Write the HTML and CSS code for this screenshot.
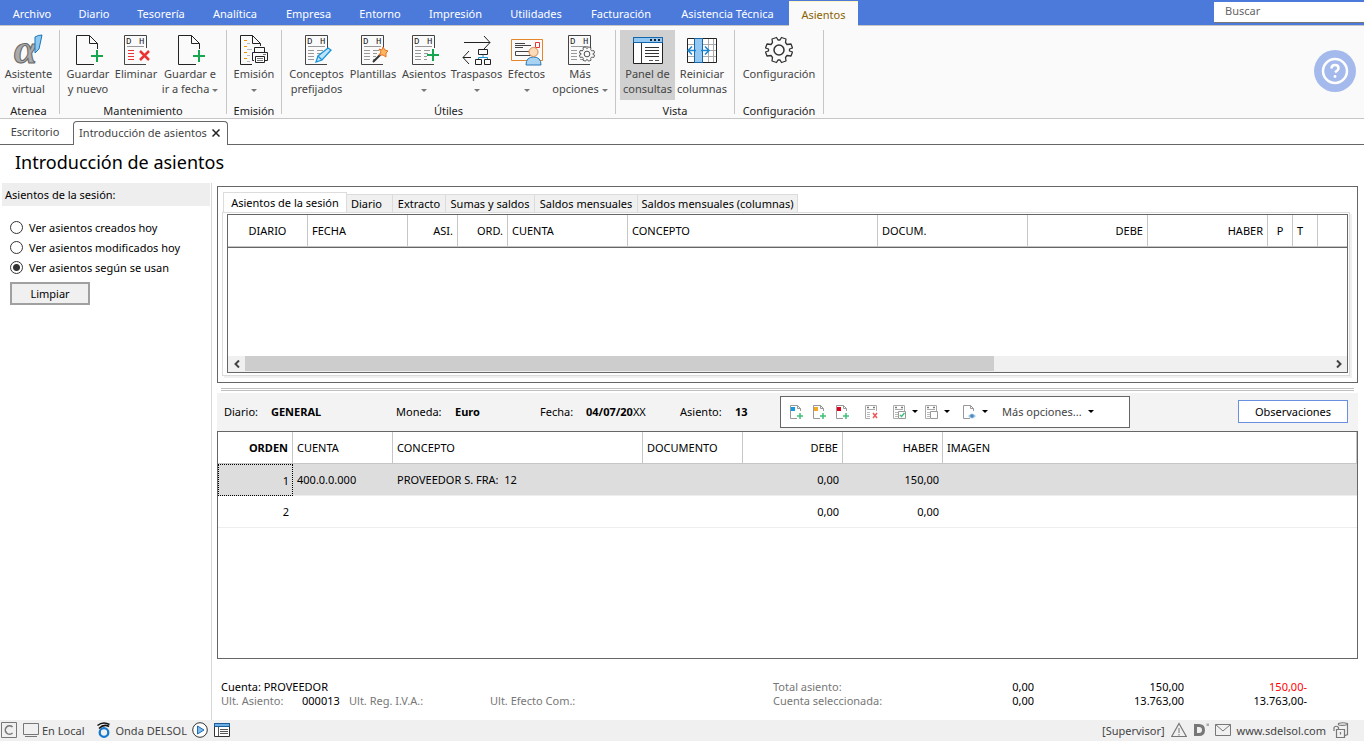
FILE: index.html
```
<!DOCTYPE html>
<html lang="es">
<head>
<meta charset="utf-8">
<title>Introducción de asientos</title>
<link rel="stylesheet" href="styles.css">
</head>
<body>
<svg class="defs" aria-hidden="true">
  <symbol id="page-add" viewBox="-2 0 32 32">
    <path d="M23.500 15V9.500L15.500 1.500H2.500V30.500H20M15.500 1.500V9.500H23.500" fill="none" stroke="#222" stroke-width="1"/>
    <path d="M23 16V28M17 22H29" stroke="#17a650" stroke-width="2"/>
  </symbol>
  <symbol id="dh" viewBox="0 0 32 32">
    <path d="M24.500 14V1.500H2.500V30.500H24" fill="none" stroke="#444"/>
    <text x="4" y="10" class="dh-text">D</text><text x="17" y="10" class="dh-text">H</text>
    <path d="M5 12.500H22" stroke="#999"/>
  </symbol>
  <symbol id="dh-lines" viewBox="0 0 32 32">
    <path d="M5 16.500H11M5 19.500H11M5 22.500H11M5 25.500H11M14 16.500H20M14 19.500H18M14 22.500H17M14 25.500H17" stroke="#999"/>
  </symbol>
  <symbol id="gear" viewBox="0 0 28 28">
    <path d="M11.500 1.500L13 4H15L16.500 1.500L21 3L20.500 6.500L22 8.500L26 8L27.500 12L24.500 13V15L27.500 16L26 20L22 19.500L20.500 21.500L21 25L16.500 26.500L15 24H13L11.500 26.500L7 25L7.500 21.500L6 19.500L2 20L0.500 16L3.500 15V13L0.500 12L2 8L6 8.500L7.500 6.500L7 3Z" fill="#fafafa" stroke="#333" stroke-width="1.300" stroke-linejoin="round"/>
    <circle cx="14" cy="14" r="5" fill="none" stroke="#333" stroke-width="1.500"/>
  </symbol>
  <symbol id="mini-page" viewBox="0 0 16 16">
    <path d="M12.500 7V4.500L9.500 1.500H2.500V14.500H9M9.500 1.500V4.500H12.500" fill="none" stroke="#999"/>
  </symbol>
  <symbol id="mini-add" viewBox="0 0 16 16">
    <path d="M12 9V15M9 12H15" stroke="#3fc07a" stroke-width="1.500"/>
  </symbol>
  <symbol id="mini-dh" viewBox="0 0 16 16">
    <path d="M13.500 7V1.500H2.500V14.500H7M4 5.500H12" fill="none" stroke="#aaa"/>
    <path d="M4 3.500H6M10 3.500H12" stroke="#777" stroke-width="1.500"/>
    <path d="M4 8.500H7M4 10.500H7M4 12.500H7" stroke="#bbb"/>
  </symbol>
</svg>

<nav class="menubar">
  <button>Archivo</button><button>Diario</button><button>Tesorería</button><button>Analítica</button><button>Empresa</button><button>Entorno</button><button>Impresión</button><button>Utilidades</button><button>Facturación</button><button>Asistencia Técnica</button><button class="current">Asientos</button>
  <input class="search" type="text" placeholder="Buscar" aria-label="Buscar">
</nav>

<header class="ribbon">
  <section class="group g-atenea">
    <div class="tools">
      <button class="tool">
        <svg viewBox="0 0 32 32"><text x="1" y="29" class="alpha">α</text><path d="M22 3Q25 1 29 1L26 15L22 19Z" fill="#8cc8f0" stroke="#1b74b8"/></svg>
        <span>Asistente<br>virtual</span></button>
    </div>
    <h2>Atenea</h2>
  </section>
  <section class="group g-mant">
    <div class="tools">
      <button class="tool"><svg><use href="#page-add"/></svg><span>Guardar<br>y nuevo</span></button>
      <button class="tool"><svg viewBox="-2 0 32 32"><use href="#dh" width="32" height="32"/><path d="M6 16.500H12M6 19.500H12M6 22.500H12M6 25.500H12" stroke="#e83434"/><path d="M18 17L27 26M27 17L18 26" stroke="#e83434" stroke-width="2.500"/></svg><span>Eliminar</span></button>
      <button class="tool"><svg><use href="#page-add"/></svg><span>Guardar e<br>ir a fecha <i class="caret"></i></span></button>
    </div>
    <h2>Mantenimiento</h2>
  </section>
  <section class="group g-emi">
    <div class="tools">
      <button class="tool"><svg viewBox="0 0 32 32"><path d="M22.500 12V9.500L14.500 1.500H2.500V30.500H14M14.500 1.500V9.500H22.500" fill="none" stroke="#222"/><path d="M6 6.500H9M6 12.500H9M6 18.500H9M6 24.500H9" stroke="#f39200"/><path d="M9 9.500H12M9 15.500H14M9 21.500H12M9 27.500H12" stroke="#bbb"/><path d="M16.500 18V13.500H26.500V18M16 26.500H14.500V18.500H29.500V26.500H27" fill="#fafafa" stroke="#222"/><path d="M17.500 22.500H26.500V28.500H17.500Z" fill="#fff" stroke="#222"/><path d="M19 24.500H25M19 26.500H25M25 20.500H28" stroke="#777"/></svg><span>Emisión<br><i class="caret"></i></span></button>
    </div>
    <h2>Emisión</h2>
  </section>
  <section class="group g-utiles">
    <div class="tools">
      <button class="tool"><svg viewBox="-2 0 32 32"><use href="#dh" width="32" height="32"/><use href="#dh-lines" width="32" height="32"/><path d="M13 28L15 22L25 14L28 16L19 26ZM15 22L19 26" fill="#bfe3f8" stroke="#1b95d8" stroke-width="1.300"/></svg><span>Conceptos<br>prefijados</span></button>
      <button class="tool"><svg viewBox="-2 0 32 32"><use href="#dh" width="32" height="32"/><use href="#dh-lines" width="32" height="32"/><path d="M14 28L23 19" stroke="#333" stroke-width="2"/><path d="M24 13L26 16L29 17L27 19V23L24 21L20 21L22 18L20 15L23 16Z" fill="#fbb65e" stroke="#e5732a"/></svg><span>Plantillas</span></button>
      <button class="tool"><svg viewBox="-2 0 32 32"><use href="#dh" width="32" height="32"/><use href="#dh-lines" width="32" height="32"/><path d="M23 15V27M17 21H29" stroke="#17a650" stroke-width="2"/></svg><span>Asientos<br><i class="caret"></i></span></button>
      <button class="tool"><svg viewBox="0 0 32 32"><path d="M3 8.500H29M23 2L29 8.500L23 15M10 23.500H2M8 17L2 23.500L8 30M17.500 15.500H26.500V20.500H17.500ZM14.500 25.500H20.500V30.500H14.500ZM23.500 25.500H29.500V30.500H23.500Z" fill="none" stroke="#222"/><path d="M22 21V23M17.500 25V23.500H26.500V25" fill="none" stroke="#1b95d8"/></svg><span>Traspasos<br><i class="caret"></i></span></button>
      <button class="tool"><svg viewBox="0 0 32 32"><path d="M0.500 5.500H31.500V26.500H0.500Z" fill="#fafafa" stroke="#e5862a"/><path d="M4 9.500H14M4 11.500H20M4 13.500H12M4.500 17.500H20V21.500H4.500Z" fill="none" stroke="#444"/><path d="M24.500 8.500H28.500V13.500H24.500Z" fill="#fff" stroke="#e83434"/><path d="M15 31Q15 23 22.500 23T30 31Z" fill="#a9d3f2" stroke="#2a79b8"/><circle cx="22.500" cy="18" r="4.500" fill="#fcdcb8" stroke="#d08a50"/></svg><span>Efectos<br><i class="caret"></i></span></button>
      <button class="tool"><svg viewBox="-2 0 32 32"><use href="#dh" width="32" height="32"/><use href="#dh-lines" width="32" height="32"/><use href="#gear" x="13" y="12" width="16" height="16"/></svg><span>Más<br>opciones <i class="caret"></i></span></button>
    </div>
    <h2>Útiles</h2>
  </section>
  <section class="group g-vista">
    <div class="tools">
      <button class="tool pressed"><svg viewBox="0 0 32 32"><path d="M1.500 3.500H30.500V29.500H1.500Z" fill="#fff" stroke="#222"/><path d="M1.500 3.500H30.500V8.500H1.500Z" fill="#92c8f2" stroke="#1766a8"/><path d="M9.500 9V29M13 13.500H27M13 16.500H27M13 19.500H27M13 22.500H27" stroke="#333"/><path d="M18 6H28" stroke="#222" stroke-width="2" stroke-dasharray="2 2"/><path d="M17 26.500H21M23 26.500H27" stroke="#555"/></svg><span>Panel de<br>consultas</span></button>
      <button class="tool"><svg viewBox="0 0 32 32"><path d="M1.500 4.500H30.500V28.500H1.500Z" fill="#fff" stroke="#222"/><path d="M2 10.500H30M2 16.500H30M2 22.500H30M22.500 5V28M27.500 5V28" stroke="#aaa"/><path d="M8.500 4.500H16.500V28.500H8.500Z" fill="#92c8f2" stroke="#1766a8"/><path d="M10 16.500H3M6 12.500L2 16.500L6 20.500M15 16.500H22M19 12.500L23 16.500L19 20.500" fill="none" stroke="#1b85d0" stroke-width="1.500"/></svg><span>Reiniciar<br>columnas</span></button>
    </div>
    <h2>Vista</h2>
  </section>
  <section class="group g-conf">
    <div class="tools">
      <button class="tool"><svg viewBox="0 0 32 32"><use href="#gear" x="2" y="2" width="28" height="28"/></svg><span>Configuración</span></button>
    </div>
    <h2>Configuración</h2>
  </section>
  <button class="help" aria-label="Ayuda"><svg viewBox="0 0 42 42"><circle cx="21" cy="21" r="21" fill="#a4baec"/><circle cx="21" cy="21" r="12" fill="none" stroke="#fff" stroke-width="2.500"/><path d="M17.500 18.500Q17.500 15 21 15T24.500 18.200Q24.500 20 21 22.300" fill="none" stroke="#fff" stroke-width="2.500"/><circle cx="21" cy="26.500" r="1.400" fill="#fff"/></svg></button>
</header>

<div class="doctabs">
  <button class="doctab">Escritorio</button>
  <button class="doctab active">Introducción de asientos <svg viewBox="0 0 8 8"><path d="M0.500 0.500L7.500 7.500M7.500 0.500L0.500 7.500" stroke="#222" stroke-width="1.500"/></svg></button>
</div>

<h1>Introducción de asientos</h1>

<div class="workspace">
  <aside class="sidebar">
    <h2>Asientos de la sesión:</h2>
    <form>
      <label><input type="radio" name="ver">Ver asientos creados hoy</label>
      <label><input type="radio" name="ver">Ver asientos modificados hoy</label>
      <label><input type="radio" name="ver" checked>Ver asientos según se usan</label>
      <button type="button">Limpiar</button>
    </form>
  </aside>

  <main>
    <section class="session">
      <div class="tabs">
        <button class="active">Asientos de la sesión</button><button class="t-dia">Diario</button><button class="t-ext">Extracto</button><button class="t-sum">Sumas y saldos</button><button class="t-men">Saldos mensuales</button><button class="t-col">Saldos mensuales (columnas)</button>
      </div>
      <div class="tabpage">
        <div class="grid">
          <table>
            <colgroup><col class="w80"><col class="w100"><col class="w50"><col class="w50"><col class="w120"><col class="w250"><col class="w150"><col class="w120"><col class="w120"><col class="w25"><col class="w25"><col></colgroup>
            <thead><tr><th class="mid">DIARIO</th><th>FECHA</th><th class="num">ASI.</th><th class="num">ORD.</th><th>CUENTA</th><th>CONCEPTO</th><th>DOCUM.</th><th class="num">DEBE</th><th class="num">HABER</th><th class="mid">P</th><th>T</th><th></th></tr></thead>
          </table>
          <div class="scrollbar">
            <button aria-label="Izquierda"><svg viewBox="0 0 8 8"><path d="M6 0.500L2.500 4L6 7.500" /></svg></button>
            <div class="track"><div class="thumb"></div></div>
            <button aria-label="Derecha"><svg viewBox="0 0 8 8"><path d="M2 0.500L5.500 4L2 7.500" /></svg></button>
          </div>
        </div>
      </div>
    </section>
    <div class="splitter"></div>

    <section class="entry">
      <span>Diario:</span><b>GENERAL</b>
      <span>Moneda:</span><b>Euro</b>
      <span>Fecha:</span><span><b>04/07/20</b>XX</span>
      <span>Asiento:</span><b>13</b>
      <div class="toolbar">
        <button aria-label="Nuevo"><svg viewBox="0 0 16 16"><use href="#mini-page"/><use href="#mini-add"/><path d="M3 3H7V7H3Z" fill="#109be6"/></svg></button>
        <button aria-label="Insertar"><svg viewBox="0 0 16 16"><use href="#mini-page"/><use href="#mini-add"/><path d="M3 3H7V7H3Z" fill="#f5a623"/></svg></button>
        <button aria-label="Añadir"><svg viewBox="0 0 16 16"><use href="#mini-page"/><use href="#mini-add"/><path d="M3 3H7V7H3Z" fill="#e0001b"/></svg></button>
        <button class="wide" aria-label="Eliminar"><svg viewBox="0 0 16 16"><use href="#mini-dh"/><path d="M10 9L14 14M14 9L10 14" stroke="#ee5555" stroke-width="1.500"/></svg></button>
        <button class="drop" aria-label="Marcar"><svg viewBox="0 0 16 16"><use href="#mini-dh"/><path d="M7.500 7.500H14.500V14.500H7.500Z" fill="#fff" stroke="#999"/><path d="M9 11L10.500 12.500L13.500 9" fill="none" stroke="#3fc07a" stroke-width="1.500"/></svg><i class="caret"></i></button>
        <button class="drop" aria-label="Desmarcar"><svg viewBox="0 0 16 16"><use href="#mini-dh"/><path d="M7.500 7.500H14.500V14.500H7.500Z" fill="#fff" stroke="#999"/></svg><i class="caret"></i></button>
        <button class="drop last" aria-label="Ver documento"><svg viewBox="0 0 16 16"><use href="#mini-page"/><path d="M7 12Q11 7 15 12Q11 17 7 12Z" fill="#a5cdeb"/><circle cx="11" cy="12" r="1.800" fill="#4e87b8"/></svg><i class="caret"></i></button>
        <button class="more">Más opciones... <i class="caret"></i></button>
      </div>
      <button class="notes">Observaciones</button>
    </section>

    <section class="lines">
      <table>
        <colgroup><col class="w75"><col class="w100"><col class="w250"><col class="w100"><col class="w100"><col class="w100"><col></colgroup>
        <thead><tr><th class="num"><b>ORDEN</b></th><th>CUENTA</th><th>CONCEPTO</th><th>DOCUMENTO</th><th class="num">DEBE</th><th class="num">HABER</th><th>IMAGEN</th></tr></thead>
        <tbody>
          <tr class="selected"><td class="num focus">1</td><td>400.0.0.000</td><td>PROVEEDOR S. FRA:&nbsp; 12</td><td></td><td class="num">0,00</td><td class="num">150,00</td><td></td></tr>
          <tr><td class="num">2</td><td></td><td></td><td></td><td class="num">0,00</td><td class="num">0,00</td><td></td></tr>
        </tbody>
      </table>
    </section>

    <footer class="totals">
      <div class="account">Cuenta: PROVEEDOR</div><div>Total asiento:</div><div class="val">0,00</div><div class="val">150,00</div><div class="val neg">150,00-</div>
      <div>Ult. Asiento:</div><div class="val start">000013</div><div>Ult. Reg. I.V.A.:</div><div>Ult. Efecto Com.:</div><div>Cuenta seleccionada:</div><div class="val">0,00</div><div class="val">13.763,00</div><div class="val">13.763,00-</div>
    </footer>
  </main>
</div>

<div class="status">
  <svg viewBox="0 0 16 16"><path d="M0.500 0.500H15.500V15.500H0.500Z" fill="none" stroke="#777"/><path d="M11.500 5A4.200 4.200 0 1 0 11.500 11" fill="none" stroke="#777" stroke-width="1.600"/></svg>
  <svg class="gap" viewBox="0 0 16 16"><path d="M0.500 1.500H15.500V12.500H0.500ZM2 14.500H14" fill="none" stroke="#777"/></svg>
  <span class="local">En Local</span>
  <svg viewBox="0 0 16 16"><circle cx="8" cy="10.500" r="4.300" fill="none" stroke="#1778cf" stroke-width="2.300"/><path d="M1.500 3.500Q7 -1 13.500 2.500M3 6.500Q8 1.500 13 4.500" fill="none" stroke="#111" stroke-width="1.600"/></svg>
  <span class="onda">Onda DELSOL</span>
  <svg viewBox="0 0 16 16"><circle cx="8" cy="8" r="7.300" fill="#fff" stroke="#333"/><path d="M5.500 4L12 8L5.500 12Z" fill="#7fb9ea" stroke="#1b6cb0"/></svg>
  <svg class="gap" viewBox="0 0 16 16"><path d="M0.500 1.500H15.500V14.500H0.500Z" fill="#fff" stroke="#333"/><path d="M0.500 1.500H15.500V4.500H0.500Z" fill="#6aaee4" stroke="#1b5b98"/><path d="M4.500 5V14M6 7.500H14M6 9.500H14M6 11.500H14" stroke="#555"/></svg>
  <span class="user">[Supervisor]</span>
  <svg viewBox="0 0 16 16"><path d="M8 1.500L15.300 14.500H0.700Z" fill="none" stroke="#777" stroke-width="1.200"/><path d="M8 6V11M8 12V13.500" stroke="#777"/></svg>
  <svg class="gap" viewBox="0 0 16 16"><path d="M2.500 3.500H6Q10.500 3.500 10.500 8T6 12.500H2.500Z" fill="none" stroke="#777" stroke-width="3"/><path d="M13.500 1.500H16V4H13.500Z" fill="#aaa"/></svg>
  <svg class="gap" viewBox="0 0 16 16"><path d="M0.500 2.500H15.500V13.500H0.500ZM0.500 2.500L8 9L15.500 2.500" fill="none" stroke="#777"/></svg>
  <a href="#">www.sdelsol.com</a>
  <svg viewBox="0 0 16 16"><path d="M5.500 3V1.500Q9.500 0 14.500 1.500V12.500L12 13.500M5.500 3Q10 4 14.500 2.500M3.500 7.500H11.500V15.500H3.500ZM5.500 7.500V5.500Q3 3 1 5.500V9M7.500 10V12.500" fill="none" stroke="#777" stroke-width="1.200"/></svg>
</div>
</body>
</html>
```
FILE: styles.css
```
* { box-sizing: border-box; }
body {
  margin: 0;
  min-height: 100vh;
  display: flex;
  flex-direction: column;
  background: #fff;
  color: #000;
  font: 11px/15px "Noto Sans", "Open Sans", sans-serif;
}
button, input { font: inherit; color: inherit; }
button { padding: 0; border: 0; background: none; white-space: nowrap; }
h1, h2 { margin: 0; font-size: 11px; font-weight: 400; }
svg { display: block; flex: none; }
.defs { display: none; }
.dh-text { font: 9px "Liberation Mono", monospace; fill: #222; }
.alpha { font: italic bold 42px "Liberation Serif", serif; fill: #aaa; stroke: #666; stroke-width: 1; }
.caret {
  display: inline-block;
  flex: none;
  vertical-align: middle;
  border: 3px solid transparent;
  border-top-color: currentColor;
  border-bottom: 0;
}

.menubar {
  display: grid;
  grid-template-columns: 64px 60px 74px 74px 73px 70px 81px 80px 90px 123px 69px 1fr 150px;
  height: 26px;
  background: #4c7adb;
  color: #fff;
  border-bottom: 1px solid #c6c6c6;
}
.menubar button { padding-top: 1px; }
.menubar .current {
  margin: 1px 0 -1px;
  padding-bottom: 1px;
  border-top: 1px solid #fff3c0;
  background: #fafafa;
  color: #8a6200;
}
.search {
  grid-column: 13;
  min-width: 0;
  width: 100%;
  height: 21px;
  margin-top: 2px;
  padding: 0 11px 3px;
  border: 0;
  border-bottom: 1px solid #777;
  border-radius: 0;
  background: #fff;
}
.search::placeholder { color: #666; opacity: 1; }

.ribbon { display: flex; background: #fafafa; border-bottom: 1px solid #c6c6c6; padding: 4px 0; color: #444; }
.group { display: flex; flex-direction: column; align-items: center; border-right: 1px solid #c6c6c6; height: 84px; }
.group h2 { color: #222; }
.tools { display: grid; height: 73px; align-items: start; flex: none; }
.tool { display: flex; flex-direction: column; align-items: center; height: 70px; padding-top: 4px; color: #444; }
.tool svg { width: 32px; height: 32px; }
.tool .caret { color: #777; }
.pressed { background: #d0d0d0; }
.g-atenea { width: 60px; padding-right: 2px; }
.g-mant { width: 167px; }
.g-mant .tools { grid-template-columns: 56px 40px 68px; margin-right: 2px; }
.g-emi { width: 55px; }
.g-utiles { width: 334px; }
.g-utiles .tools { grid-template-columns: 59px 54px 48px 57px 43px 64px; margin-left: 2px; }
.g-vista { width: 119px; }
.g-vista .tools { grid-template-columns: 55px 54px; margin-right: 1px; }
.g-conf { width: 89px; }
.help { width: 42px; height: 42px; margin: 20px 8px 0 auto; }

.doctabs { display: flex; height: 26px; padding-top: 2px; border-bottom: 1px solid #666; }
.doctab { width: 73px; padding: 0 3px 2px 0; color: #444; }
.doctab.active {
  display: flex;
  align-items: center;
  justify-content: center;
  gap: 5px;
  width: 155px;
  margin-bottom: -1px;
  padding: 0 2px 2px 0;
  border: 1px solid #666;
  border-bottom: 0;
  border-radius: 4px 4px 0 0;
  background: #fff;
}
.doctab svg { width: 8px; height: 8px; }
h1 { padding: 5px 15px 8px; font-size: 18px; line-height: 25px; }

.workspace { flex: 1; display: flex; }
.sidebar { width: 212px; padding: 0 1px 0 2px; border-right: 1px solid #d8d8d8; flex: none; }
.sidebar h2 { height: 23px; padding: 4px 3px; background: #eee; }
.sidebar form { display: flex; flex-direction: column; align-items: flex-start; padding: 11px 8px; }
.sidebar label { display: flex; align-items: center; gap: 6px; height: 20px; }
.sidebar input {
  appearance: none;
  width: 13px;
  height: 13px;
  margin: 0;
  border: 1px solid #333;
  border-radius: 50%;
  background: #fff;
}
.sidebar input:checked { background: radial-gradient(circle, #333 0 3px, #fff 4px); }
.sidebar form button { width: 80px; height: 23px; margin-top: 5px; border: 2px solid #a0a0a0; background: #f0f0f0; }

main { flex: 1; min-width: 0; display: flex; flex-direction: column; padding: 3px 6px 0 5px; }
.session { border: 1px solid #666; padding: 5px 7px 6px 4px; }
.tabs { display: flex; align-items: flex-end; height: 20px; padding-left: 1px; }
.tabs button { height: 18px; border: 1px solid #dcdcdc; border-width: 1px 1px 0 0; background: #f0f0f0; }
.tabs .active { width: 124px; height: 20px; padding-bottom: 1px; border-left-width: 1px; background: #fff; }
.tabs .t-dia { width: 46px; padding-right: 6px; }
.t-ext { width: 53px; }
.t-sum { width: 89px; }
.t-men { width: 103px; }
.t-col { width: 160px; }
.tabpage { padding: 1px 1px 2px 4px; border: 1px solid #dcdcdc; box-shadow: 2px 2px 0 #f0f0f0; }
.grid { display: flex; flex-direction: column; height: 159px; border: 1px solid #666; overflow: hidden; }
table { width: 100%; table-layout: fixed; border-collapse: separate; border-spacing: 0; }
th, td { height: 32px; padding: 0 4px; font-weight: 400; text-align: left; white-space: nowrap; }
th { border-right: 1px solid #c6c6c6; border-bottom: 1px solid #c6c6c6; }
.grid thead { box-shadow: 0 1px 0 #666; }
.grid th:last-child { border-right: 0; }
th.num, td.num { text-align: right; }
th.mid { text-align: center; }
.w25 { width: 25px; }
.w50 { width: 50px; }
.w75 { width: 75px; }
.w80 { width: 80px; }
.w100 { width: 100px; }
.w120 { width: 120px; }
.w150 { width: 150px; }
.w250 { width: 250px; }
.scrollbar { display: flex; height: 16px; margin-top: auto; background: #f0f0f0; }
.scrollbar button { width: 17px; display: grid; place-items: center; }
.scrollbar svg { width: 8px; height: 8px; fill: none; stroke: #444; stroke-width: 2; }
.track { flex: 1; }
.thumb { width: 69%; height: 15px; background: #cdcdcd; }
.splitter { height: 3px; margin: 5px 4px 2px; border: 1px solid #c0c0c0; border-width: 1px 0; }

.entry {
  display: grid;
  grid-template-columns: 47px 125px 59px 85px 46px 94px 55px 45px 350px 1fr 110px;
  align-items: center;
  height: 38px;
  padding: 0 10px 1px 7px;
  background: #f3f3f3;
}
.toolbar { display: flex; align-items: center; height: 32px; padding-left: 7px; border: 1px solid #666; background: #fff; }
.toolbar button { width: 23px; height: 20px; display: flex; align-items: center; }
.toolbar svg { width: 16px; height: 16px; }
.toolbar .wide { width: 28px; margin-left: 6px; }
.toolbar .drop { width: 32px; gap: 5px; }
.toolbar .last { width: 41px; margin-left: 6px; }
.toolbar .more { width: auto; gap: 6px; color: #444; }
.more .caret { color: #000; }
.notes { grid-column: 11; height: 23px; border: 1px solid #6b8fe0; background: #fff; }

.lines { flex: 1; border: 1px solid #666; }
.lines td { border-bottom: 1px solid #eee; }
.lines .selected td { background: #ddd; }
.lines .selected .focus { border: 1px dotted #000; padding: 0 3px; }

.totals {
  display: grid;
  grid-template-columns: 81px 47px 141px 283px 150px 111px 150px 123px;
  padding: 21px 0 12px 4px;
  line-height: 14px;
  color: #777;
}
.account { grid-column: 1 / 5; color: #000; }
.val { color: #000; text-align: right; }
.totals .start { text-align: left; }
.totals .neg { color: #f00; }

.status { display: flex; align-items: center; height: 21px; padding: 0 15px 1px 1px; background: #f0f0f0; color: #444; }
.status svg { width: 16px; height: 16px; }
.status .gap { margin-left: 6px; }
.status a { margin: 0 7px 0 6px; color: #444; text-decoration: none; }
.local { margin: 0 12px 0 3px; }
.onda { margin: 0 5px 0 3px; }
.user { margin: 0 6px 0 auto; }
```
